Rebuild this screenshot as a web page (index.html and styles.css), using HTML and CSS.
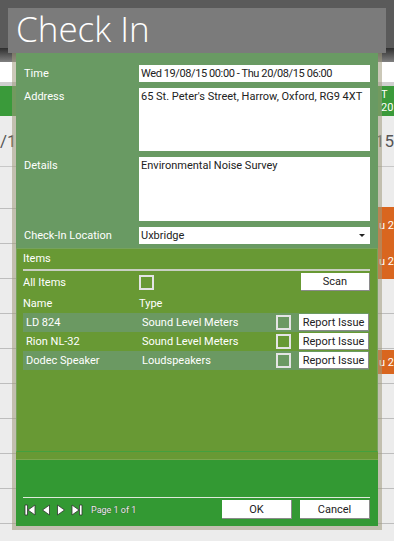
FILE: index.html
```html
<!DOCTYPE html>
<html lang="en">
<head>
<meta charset="UTF-8">
<meta name="viewport" content="width=device-width, initial-scale=1.0">
<title>Check In</title>
<link rel="stylesheet" href="styles.css">
</head>
<body>

<div class="app">
    <div class="app-header"></div>
    <div class="app-toolbar"></div>
    <div class="app-search"></div>
    <div class="app-days">
        <div class="day-cell"></div>
        <div class="day-cell day-right"><span>T</span><span>20</span></div>
    </div>
    <div class="app-dates">
        <span class="date-left">/1</span>
        <span class="date-right">15</span>
    </div>
    <div class="app-grid">
        <div class="grid-col"></div>
        <div class="grid-col grid-right">
            <div class="event event-one"><span>u 2</span><span>u 2</span></div>
            <div class="event event-two"><span>u 2</span></div>
        </div>
    </div>
</div>

<div class="dialog">
    <div class="dialog-title">Check In</div>
    <div class="dialog-body">
        <div class="form">
            <label class="form-label">Time</label>
            <div class="field field-line field-time">Wed 19/08/15 00:00 - Thu 20/08/15 06:00</div>

            <label class="form-label">Address</label>
            <div class="field field-area">65 St. Peter's Street, Harrow, Oxford, RG9 4XT</div>

            <label class="form-label">Details</label>
            <div class="field field-area field-tall">Environmental Noise Survey</div>

            <label class="form-label">Check-In Location</label>
            <div class="field field-line field-select">
                <span>Uxbridge</span>
                <span class="select-arrow"></span>
            </div>
        </div>

        <div class="items">
            <div class="items-title">Items</div>
            <div class="items-rule"></div>
            <div class="all-items">
                <span class="all-label">All Items</span>
                <span class="checkbox"></span>
                <button class="btn btn-scan">Scan</button>
            </div>
            <div class="item-head">
                <span>Name</span>
                <span>Type</span>
            </div>
            <div class="item-row shaded">
                <span class="item-name">LD 824</span>
                <span class="item-type">Sound Level Meters</span>
                <span class="checkbox"></span>
                <button class="btn">Report Issue</button>
            </div>
            <div class="item-row">
                <span class="item-name">Rion NL-32</span>
                <span class="item-type">Sound Level Meters</span>
                <span class="checkbox"></span>
                <button class="btn">Report Issue</button>
            </div>
            <div class="item-row shaded">
                <span class="item-name">Dodec Speaker</span>
                <span class="item-type">Loudspeakers</span>
                <span class="checkbox"></span>
                <button class="btn">Report Issue</button>
            </div>
        </div>

        <div class="items-gap"></div>

        <div class="footer">
            <div class="footer-bar">
                <div class="pager">
                    <svg class="pager-icon" width="12" height="12" viewBox="0 0 12 12">
                        <path d="M1 1h2.5v10H1z M11 1v10L4 6z" fill="#fff" stroke="#333" stroke-width="0.8"/>
                    </svg>
                    <svg class="pager-icon" width="10" height="12" viewBox="0 0 10 12">
                        <path d="M8.5 1v10L1.5 6z" fill="#fff" stroke="#333" stroke-width="0.8"/>
                    </svg>
                    <svg class="pager-icon" width="10" height="12" viewBox="0 0 10 12">
                        <path d="M1.5 1v10L8.5 6z" fill="#fff" stroke="#333" stroke-width="0.8"/>
                    </svg>
                    <svg class="pager-icon" width="12" height="12" viewBox="0 0 12 12">
                        <path d="M1 1v10L8 6z M8.5 1H11v10H8.5z" fill="#fff" stroke="#333" stroke-width="0.8"/>
                    </svg>
                    <span class="page-text">Page 1 of 1</span>
                </div>
                <button class="btn btn-footer">OK</button>
                <button class="btn btn-footer">Cancel</button>
            </div>
        </div>
    </div>
</div>

</body>
</html>
```

FILE: styles.css
```css
body {
    margin: 0;
    width: 394px;
    height: 541px;
    overflow: hidden;
    position: relative;
    font-family: 'Roboto', 'Segoe UI', sans-serif;
    background-color: #ececec;
}

/* background application behind the dialog */
.app {
    height: 541px;
    display: flex;
    flex-direction: column;
}

.app-header {
    height: 48px;
    background-color: #5a5a5a;
}

.app-toolbar {
    height: 14px;
    background: linear-gradient(#2e2e2e, #808080);
}

.app-search {
    height: 20px;
    background-color: #fff;
    border-bottom: 4px solid #cfcfcf;
}

.app-days {
    height: 30px;
    display: flex;
    justify-content: space-between;
    background-color: #3a9a3a;
}

.day-cell {
    width: 16px;
    overflow: hidden;
    white-space: nowrap;
}

.day-right {
    display: flex;
    flex-direction: column;
    color: #fff;
    font-size: 11px;
    line-height: 13px;
    padding-top: 2px;
    padding-left: 3px;
    box-sizing: border-box;
}

.app-dates {
    height: 50px;
    display: flex;
    justify-content: space-between;
    align-items: center;
    font-size: 17px;
    color: #555;
    border-bottom: 1px solid #c8c8c8;
}

.app-grid {
    flex: 1;
    display: flex;
    justify-content: space-between;
    background: repeating-linear-gradient(#ececec 0, #ececec 34px, #bdbdbd 34px, #bdbdbd 35px);
    background-position: 0 7px;
}

.grid-col {
    width: 16px;
}

.grid-right {
    display: flex;
    flex-direction: column;
}

.event {
    background-color: #d9661f;
    color: #fff;
    font-size: 11px;
    display: flex;
    flex-direction: column;
    justify-content: space-around;
    padding-left: 1px;
    white-space: nowrap;
}

.event-one {
    margin-top: 40px;
    height: 72px;
}

.event-two {
    margin-top: 71px;
    height: 24px;
}

/* dialog */
.dialog {
    position: absolute;
    left: 8px;
    top: 8px;
    width: 378px;
}

.dialog-title {
    height: 45px;
    background-color: #7b7b7b;
    color: #fff;
    font-family: 'Open Sans', sans-serif;
    font-size: 35px;
    font-weight: 300;
    line-height: 42px;
    padding-left: 8px;
    box-sizing: border-box;
}

.dialog-body {
    margin: 0 4px;
    border: 4px solid rgba(160, 155, 125, 0.55);
    border-top: none;
    background-clip: padding-box;
    background-color: #699a63;
    display: flex;
    flex-direction: column;
    font-size: 11px;
    color: #fff;
}

.form {
    display: grid;
    grid-template-columns: 115px 1fr;
    row-gap: 6px;
    padding: 12px 8px 4px 8px;
}

.form-label {
    line-height: 17px;
}

.field {
    background-color: #fff;
    color: #222;
    padding: 0 2px;
    line-height: 17px;
}

.field-line {
    height: 17px;
}

.field-time {
    letter-spacing: -0.4px;
}

.field-area {
    height: 63px;
}

.field-tall {
    height: 64px;
}

.field-select {
    display: flex;
    justify-content: space-between;
    align-items: center;
}

.select-arrow {
    width: 0;
    height: 0;
    border-left: 3px solid transparent;
    border-right: 3px solid transparent;
    border-top: 3px solid #222;
    margin-right: 3px;
}

.items {
    height: 202px;
    background-color: #689934;
    border: 1px solid #77a35c;
    border-bottom-color: #44a03e;
    padding: 0 7px 0 6px;
}

.items-title {
    line-height: 20px;
}

.items-rule {
    height: 2px;
    background-color: #c9cfc2;
}

.all-items {
    display: flex;
    align-items: center;
    height: 18px;
    margin-top: 2px;
}

.all-label {
    width: 116px;
}

.checkbox {
    width: 11px;
    height: 11px;
    border: 2px solid #e4e4e4;
    display: inline-block;
}

.btn {
    font-family: 'Roboto', 'Segoe UI', sans-serif;
    font-size: 11px;
    color: #222;
    background-color: #fff;
    border: none;
    border-right: 1px solid #8a8a8a;
    border-bottom: 1px solid #8a8a8a;
    padding: 0;
    height: 18px;
    width: 70px;
}

.btn-scan {
    margin-left: auto;
    width: 69px;
}

.item-head {
    display: grid;
    grid-template-columns: 116px 1fr;
    height: 19px;
    line-height: 19px;
    margin-top: 3px;
}

.item-row {
    display: grid;
    grid-template-columns: 116px 1fr 15px 78px;
    align-items: center;
    height: 19px;
    width: 346px;
}

.item-row:first-of-type {
    height: 20px;
}

.item-row.shaded {
    background-color: #6b9962;
}

.item-name,
.item-type {
    padding-left: 3px;
    white-space: nowrap;
}

.item-row .btn {
    height: 17px;
    margin-left: 8px;
    width: 70px;
}

.items-gap {
    height: 7px;
    background-color: #689934;
    border-bottom: 1px solid #7aa84e;
}

.footer {
    height: 66px;
    background-color: #339933;
    padding: 37px 8px 0 7px;
    box-sizing: border-box;
}

.footer-bar {
    border-top: 1px solid #dfe9dc;
    display: flex;
    align-items: center;
    gap: 8px;
    padding-top: 2px;
}

.pager {
    display: flex;
    align-items: center;
    gap: 5px;
    margin-right: auto;
    padding-left: 1px;
}

.page-text {
    font-size: 9px;
    color: #eee;
    margin-left: 3px;
    text-shadow: 0 0 1px #333;
}

.btn-footer {
    width: 70px;
    height: 19px;
}
```
